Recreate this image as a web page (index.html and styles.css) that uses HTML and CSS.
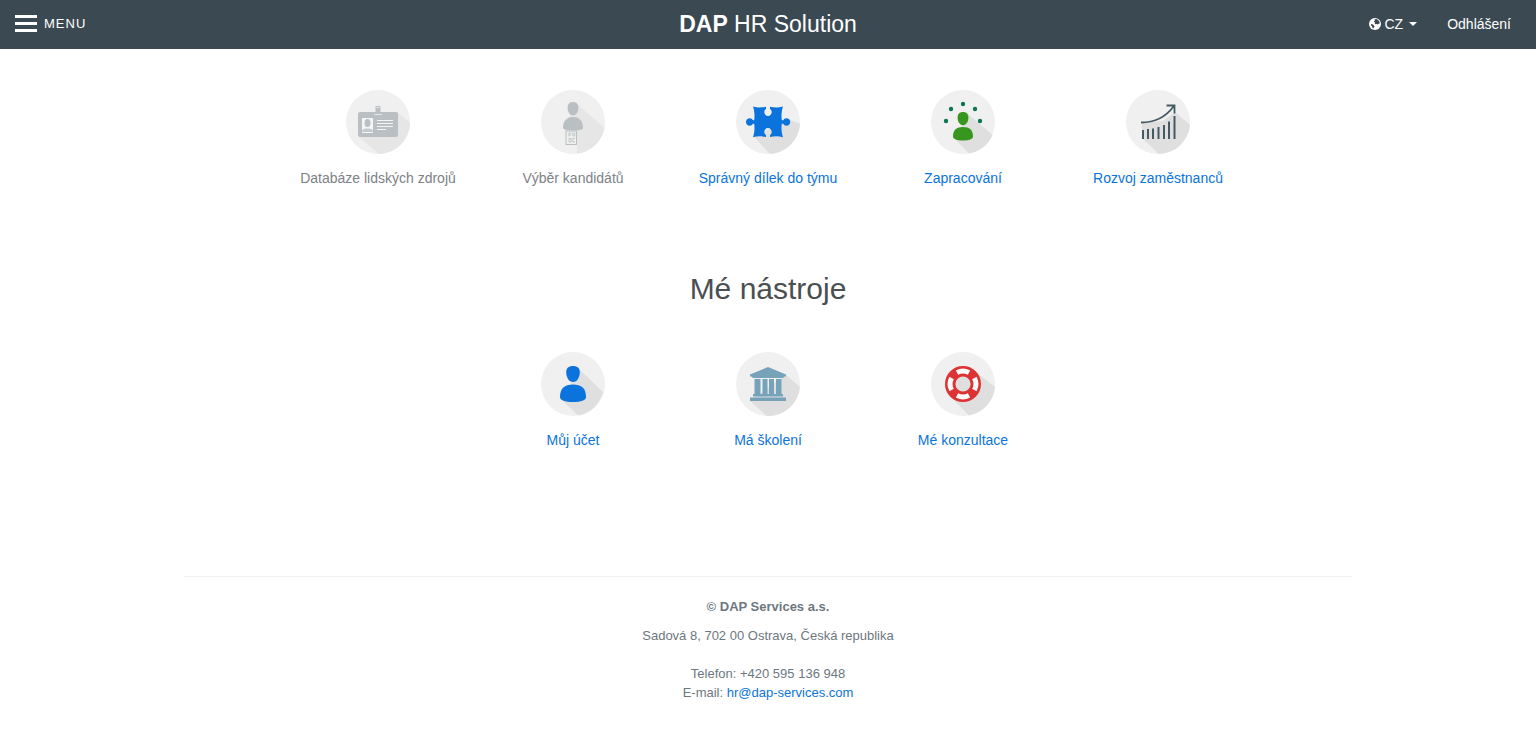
FILE: index.html
```html
<!DOCTYPE html>
<html lang="cs">
<head>
<meta charset="utf-8">
<meta name="viewport" content="width=device-width, initial-scale=1">
<title>DAP HR Solution</title>
<link rel="stylesheet" href="styles.css">
</head>
<body>
<header class="topbar">
  <div class="topbar-side">
    <button class="menu-button" type="button">
      <svg class="menu-icon" viewBox="0 0 22 17" aria-hidden="true"><path d="M0 0h22v3H0zM0 7h22v3H0zM0 14h22v3H0z"/></svg>
      <span>MENU</span>
    </button>
  </div>
  <a class="brand" href="#"><strong>DAP</strong> HR Solution</a>
  <nav class="topbar-side topbar-end">
    <button class="lang-button" type="button">
      <svg class="globe" viewBox="0 0 12 12" aria-hidden="true"><circle cx="6" cy="6" r="6" fill="#fff"/><path d="M5.500 1.200l1.800-.2 1.500.8 1.200 1.200.8 1.800-.8 1.400-.8-.6-.4 1-1.200-.6-1.200.2-.8-1 .6-1.200-1 .2-.4-.8 1-.4zM2 6l1.400.2 1.400 1 .8 1-.8 1.200-.4 1.200-1-.8-.4-1.600-1-1z" fill="#3b4952"/></svg>
      <span>CZ</span>
      <svg class="caret" viewBox="0 0 8 4" aria-hidden="true"><path d="M0 0h8L4 4z"/></svg>
    </button>
    <a class="logout" href="#">Odhlášení</a>
  </nav>
</header>

<main class="container">
  <section class="tiles">
    <a class="tile tile-muted" href="#">
      <svg class="tile-icon" viewBox="0 0 64 64" aria-hidden="true">
        <circle cx="32" cy="32" r="32" fill="#f0f0f0"/>
        <path d="M51 22L64 33A32 32 0 0 1 33 64L13 47z" fill="#e6e6e6"/>
        <rect x="12" y="22" width="40" height="25" rx="2" fill="#b9bfc2"/>
        <path d="M29.500 16h5v6h1.500v2.500h-8V22h1.500z" fill="#b9bfc2"/>
        <path d="M30.500 17.500h3M28 24.500h8" stroke="#f0f0f0" stroke-width=".8"/>
        <rect x="16" y="28" width="11" height="15" fill="#f5f5f5"/>
        <ellipse cx="21.500" cy="33" rx="3" ry="4" fill="#b9bfc2"/>
        <path d="M16 42v-1.500c1-1.500 3-2 5.500-2s4.500.5 5.500 2V42z" fill="#c5cacc"/>
        <path d="M31 30.500h16M31 33.500h16M31 36.500h16M31 39.500h9" stroke="#f5f5f5"/>
      </svg>
      <span>Databáze lidských zdrojů</span>
    </a>
    <a class="tile tile-muted" href="#">
      <svg class="tile-icon" viewBox="0 0 64 64" aria-hidden="true">
        <circle cx="32" cy="32" r="32" fill="#f0f0f0"/>
        <path d="M37 15L63.500 38A32 32 0 0 1 36 63.700V55L26 30z" fill="#e6e6e6"/>
        <path d="M32 12c3.600 0 5.400 2.200 5.400 5.500 0 4-2 8-5.400 8s-5.400-4-5.400-8c0-3.300 1.800-5.500 5.400-5.500z" fill="#b9bfc2"/>
        <path d="M22 38c0-7 3.500-11 10-11s10 4 10 11c0 1.600-4 2.500-10 2.500S22 39.600 22 38z" fill="#b9bfc2"/>
        <rect x="25" y="41" width="10.500" height="13.500" fill="#efefef" stroke="#b9bfc2"/>
        <path d="M28 46.500V43h2.500M28 44.800h2M31.800 43h2v3h-2zM28 48.500h2v3.500h-2zM34 48.500h-2.200V52H34" fill="none" stroke="#b9bfc2" stroke-width=".8"/>
      </svg>
      <span>Výběr kandidátů</span>
    </a>
    <a class="tile" href="#">
      <svg class="tile-icon" viewBox="0 0 64 64" aria-hidden="true">
        <circle cx="32" cy="32" r="32" fill="#f0f0f0"/>
        <path d="M52 29L64 34A32 32 0 0 1 34 64L18 47z" fill="#dfdfdf"/>
        <path d="M17 16.500c4 1.300 8.500 1.300 13 .2v2.200c-1 .7-1.700 1.700-1.700 3 0 2.200 1.500 4 3.700 4s3.700-1.800 3.700-4c0-1.300-.7-2.300-1.700-3v-2.200c4.500 1.100 9 1.100 13-.2-1.500 4.500-1.800 9-1.200 13.700h1.400c.7-1.200 1.800-2 3.200-2 2.200 0 3.800 1.700 3.800 3.800s-1.600 3.800-3.800 3.800c-1.400 0-2.500-.8-3.200-2h-1.400c-.6 4.600-.3 9 1.200 13.500-4-1.300-8.500-1.300-13-.2v-2.200c1-.7 1.700-1.700 1.700-3 0-2.200-1.500-4-3.700-4s-3.700 1.800-3.700 4c0 1.300.7 2.300 1.700 3v2.200c-4.500-1.100-9-1.100-13 .2 1.500-4.500 1.800-8.900 1.200-13.500H17c-.7 1.200-1.800 2-3.200 2-2.200 0-3.800-1.700-3.800-3.800s1.600-3.800 3.800-3.800c1.400 0 2.500.8 3.200 2h1.200c.6-4.700.3-9.200-1.200-13.700z" fill="#0a74dc"/>
      </svg>
      <span>Správný dílek do týmu</span>
    </a>
    <a class="tile" href="#">
      <svg class="tile-icon" viewBox="0 0 64 64" aria-hidden="true">
        <circle cx="32" cy="32" r="32" fill="#f0f0f0"/>
        <path d="M37 24L61.500 45A32 32 0 0 1 38 63.500L23 48z" fill="#dfdfdf"/>
        <path d="M32 22c3.600 0 5.400 2.200 5.400 5.500 0 4-2 7.700-5.400 7.700s-5.400-3.700-5.400-7.700c0-3.300 1.800-5.500 5.400-5.500z" fill="#37961e"/>
        <path d="M22 46.500C22 40 25.500 37 32 37s10 3 10 9.500c0 2.500-4 4-10 4s-10-1.500-10-4z" fill="#37961e"/>
        <g fill="#0a7852"><circle cx="15" cy="31" r="2.200"/><circle cx="20" cy="19" r="2.200"/><circle cx="32" cy="14" r="2.200"/><circle cx="44" cy="19" r="2.200"/><circle cx="49" cy="31" r="2.200"/></g>
      </svg>
      <span>Zapracování</span>
    </a>
    <a class="tile" href="#">
      <svg class="tile-icon" viewBox="0 0 64 64" aria-hidden="true">
        <circle cx="32" cy="32" r="32" fill="#f0f0f0"/>
        <path d="M49 22L64 35A32 32 0 0 1 33 64L16 48V33L37 31z" fill="#dfdfdf"/>
        <path d="M15 32.500c13 0 24-4.500 32.500-16M40.500 15.500H48.500V23.500" fill="none" stroke="#455a64" stroke-width="1.800"/>
        <path d="M17 40v9M22 39v10M27 38.500V49M32.500 37v12M38 35v14M43 31.500V49M48.500 26v23" stroke="#455a64" stroke-width="2"/>
      </svg>
      <span>Rozvoj zaměstnanců</span>
    </a>
  </section>

  <h1 class="heading">Mé nástroje</h1>

  <section class="tiles">
    <a class="tile" href="#">
      <svg class="tile-icon" viewBox="0 0 64 64" aria-hidden="true">
        <circle cx="32" cy="32" r="32" fill="#f0f0f0"/>
        <path d="M38 17L62 40A32 32 0 0 1 37 63.600L21 48z" fill="#dfdfdf"/>
        <path d="M32 14c4.500 0 6.800 2.200 6.800 6 0 5-2.500 10-6.800 10s-6.800-5-6.800-10c0-3.800 2.300-6 6.800-6z" fill="#0a74dc"/>
        <path d="M19 45c0-8.500 4.500-12.500 13-12.500S45 36.500 45 45c0 3.500-5 5-13 5s-13-1.500-13-5z" fill="#0a74dc"/>
      </svg>
      <span>Můj účet</span>
    </a>
    <a class="tile" href="#">
      <svg class="tile-icon" viewBox="0 0 64 64" aria-hidden="true">
        <circle cx="32" cy="32" r="32" fill="#f0f0f0"/>
        <path d="M50 23L64 35A32 32 0 0 1 31 64L14 49z" fill="#dfdfdf"/>
        <path d="M32 15L50 22.500V24.500H48.500L47 26H17L15.500 24.500H14V22.500zM18.500 27h6v15h-6zM26.500 27h5v15h-5zM33 27h5v15h-5zM40 27h5.500v15H40zM17 42h30v2.500H17zM14 45.500h36V49H14z" fill="#77a3ba"/>
      </svg>
      <span>Má školení</span>
    </a>
    <a class="tile" href="#">
      <svg class="tile-icon" viewBox="0 0 64 64" aria-hidden="true">
        <circle cx="32" cy="32" r="32" fill="#f0f0f0"/>
        <path d="M46 21L64 35A32 32 0 0 1 38 63.500L20 45z" fill="#dfdfdf"/>
        <circle cx="32" cy="32" r="12.800" fill="#dfdfdf" stroke="#dc3434" stroke-width="10.400"/>
        <g fill="none" stroke="#fafafa" stroke-width="5"><path d="M26 20.600a12.900 12.900 0 0 1 12 0M43.400 26a12.900 12.900 0 0 1 0 12M38 43.400a12.900 12.900 0 0 1-12 0M20.600 38a12.900 12.900 0 0 1 0-12"/></g>
      </svg>
      <span>Mé konzultace</span>
    </a>
  </section>
</main>

<footer class="container footer">
  <strong class="company">© DAP Services a.s.</strong>
  <address class="address">Sadová 8, 702 00 Ostrava, Česká republika</address>
  <p class="contact">Telefon: +420 595 136 948<br>E-mail: <a href="mailto:hr@dap-services.com">hr@dap-services.com</a></p>
</footer>
</body>
</html>
```
FILE: styles.css
```css
* {
  box-sizing: border-box;
}

body {
  margin: 0;
  background: #fff;
  color: #6d7780;
  font-family: "Liberation Sans", Arial, sans-serif;
  font-size: 14px;
  line-height: 20px;
}

a {
  color: #0a74dc;
  text-decoration: none;
}

button {
  display: flex;
  align-items: center;
  padding: 0;
  border: 0;
  background: none;
  color: #fff;
  font: inherit;
  cursor: pointer;
}

.topbar {
  display: flex;
  align-items: center;
  height: 49px;
  padding: 0 0 2px;
  background: #3b4952;
  color: #fff;
}

.topbar-side {
  display: flex;
  flex: 1 1 0;
  padding: 0 25px 0 15px;
}

.topbar-end {
  justify-content: flex-end;
  gap: 30px;
}

.menu-button {
  gap: 7px;
  letter-spacing: 1px;
  font-size: 13px;
}

.menu-icon {
  width: 22px;
  height: 17px;
  fill: #fff;
}

.brand {
  color: #fff;
  font-size: 23px;
  line-height: 28px;
}

.lang-button {
  gap: 4px;
}

.globe {
  width: 12px;
  height: 12px;
}

.caret {
  width: 8px;
  height: 4px;
  margin-left: 2px;
  fill: #fff;
}

.logout {
  color: #fff;
}

.container {
  width: 100%;
  max-width: 1168px;
  margin: 0 auto;
}

.tiles {
  display: flex;
  flex-wrap: wrap;
  justify-content: center;
}

.tile {
  display: flex;
  flex-direction: column;
  align-items: center;
  gap: 14px;
  width: 195px;
}

.tile-muted {
  color: #7d8287;
}

.tile-icon {
  width: 64px;
  height: 64px;
}

main {
  padding: 41px 0 126px;
}

.heading {
  margin: 80px 0 42px;
  color: #4a4f52;
  font-size: 30px;
  font-weight: 400;
  line-height: 42px;
  text-align: center;
}

.footer {
  display: flex;
  flex-direction: column;
  align-items: center;
  gap: 10px;
  padding: 20px 0 40px;
  border-top: 1px solid #f2f2f2;
  font-size: 13px;
  line-height: 19px;
  text-align: center;
}

.address {
  font-style: normal;
}

.contact {
  margin: 9px 0 0;
}
```
